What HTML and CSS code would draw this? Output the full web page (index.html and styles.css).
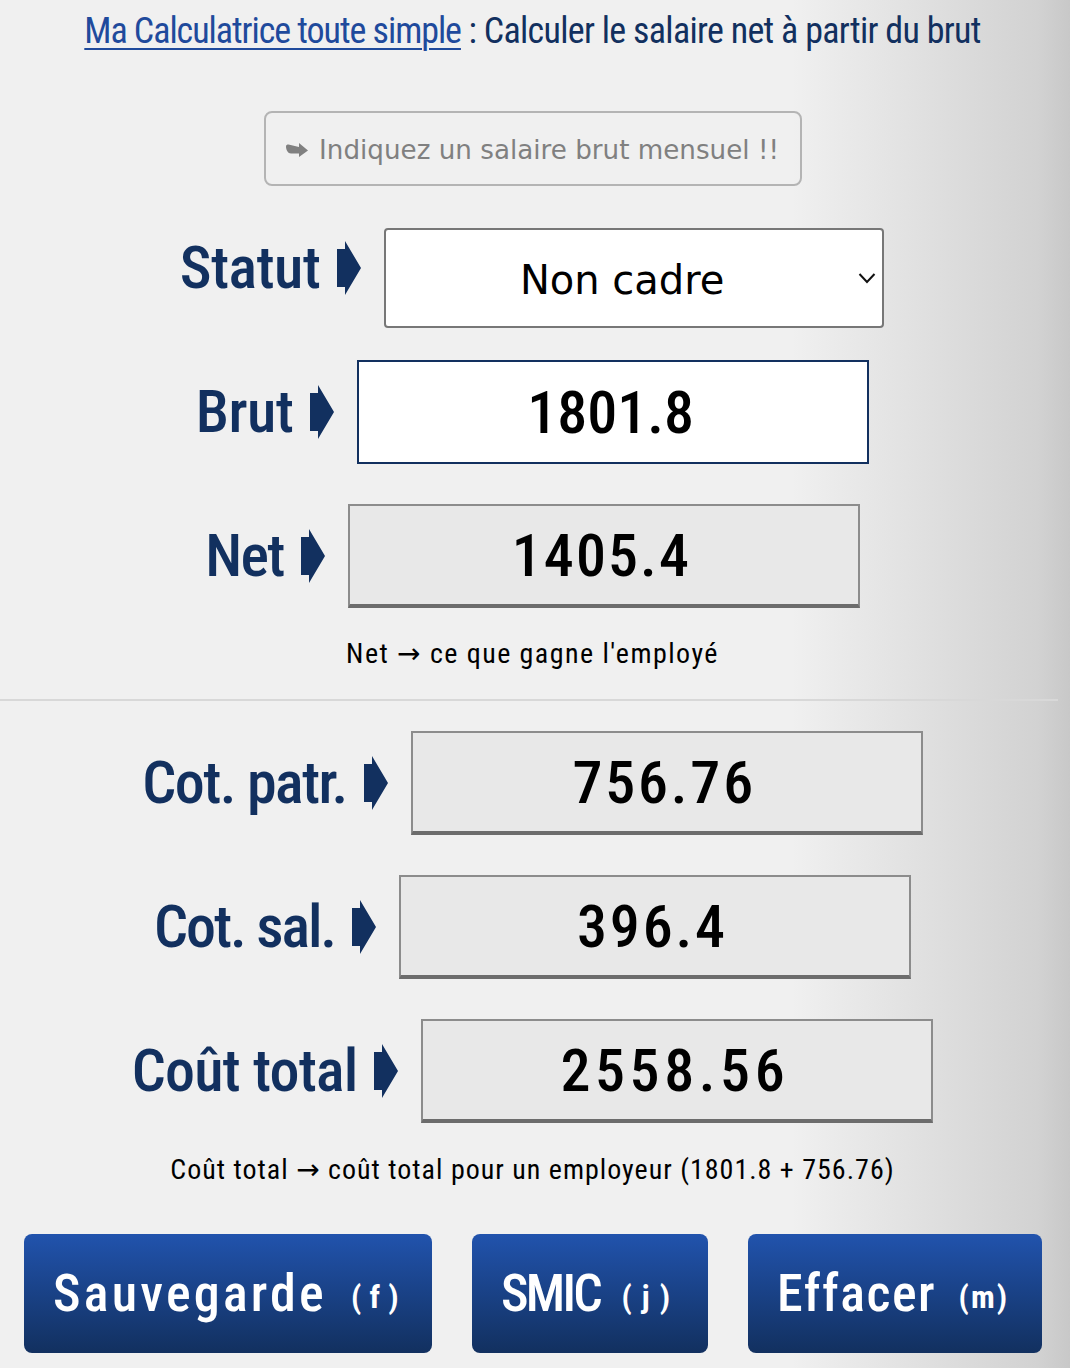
FILE: index.html
```html
<!DOCTYPE html>
<html lang="fr">
<head>
<title>Calculer le salaire net à partir du brut</title>
<meta charset="utf-8">
<meta name="viewport" content="width=device-width, initial-scale=1.0">
<link rel="stylesheet" href="styles.css">
</head>
<body>

<h1 class="title"><a href="#">Ma Calculatrice toute simple</a> : Calculer le salaire net à partir du brut</h1>

<div class="hint-row">
  <div class="hint"><svg class="hint-arrow" viewBox="0 0 22 14"><path d="M0 3.500C0 2 1 1.500 2.500 1.500L13 4V0l9 7.500L13 14v-3.500H5C2 10.500 0 7 0 3.500z"/></svg> Indiquez un salaire brut mensuel !!</div>
</div>

<div class="row row-select">
  <label class="field-label">Statut <svg class="arrow" viewBox="0 0 24 54"><path d="M0 8h8V0l16 27L8 54v-8H0z"/></svg></label>
  <div class="select-box">
    <span class="select-text">Non cadre</span>
    <svg class="chevron" viewBox="0 0 18 12"><path d="M1.500 2l7.500 8 7.500-8"/></svg>
  </div>
</div>

<div class="row">
  <label class="field-label">Brut <svg class="arrow" viewBox="0 0 24 54"><path d="M0 8h8V0l16 27L8 54v-8H0z"/></svg></label>
  <div class="value value-input">1801.8</div>
</div>

<div class="row">
  <label class="field-label label-net">Net <svg class="arrow" viewBox="0 0 24 54"><path d="M0 8h8V0l16 27L8 54v-8H0z"/></svg></label>
  <div class="value value-net">1405.4</div>
</div>

<p class="note note-net">Net <span class="note-arrow">→</span> ce que gagne l'employé</p>

<hr class="divider">

<div class="row">
  <label class="field-label label-patr">Cot. patr. <svg class="arrow" viewBox="0 0 24 54"><path d="M0 8h8V0l16 27L8 54v-8H0z"/></svg></label>
  <div class="value">756.76</div>
</div>

<div class="row">
  <label class="field-label label-sal">Cot. sal. <svg class="arrow" viewBox="0 0 24 54"><path d="M0 8h8V0l16 27L8 54v-8H0z"/></svg></label>
  <div class="value">396.4</div>
</div>

<div class="row">
  <label class="field-label label-total">Coût total <svg class="arrow" viewBox="0 0 24 54"><path d="M0 8h8V0l16 27L8 54v-8H0z"/></svg></label>
  <div class="value value-total">2558.56</div>
</div>

<p class="note note-total">Coût total <span class="note-arrow">→</span> coût total pour un employeur (1801.8 + 756.76)</p>

<div class="buttons">
  <button class="btn btn-save">Sauvegarde <small>(f)</small></button>
  <button class="btn btn-smic">SMIC <small>(j)</small></button>
  <button class="btn btn-clear">Effacer <small>(m)</small></button>
</div>

</body>
</html>
```

FILE: styles.css
```css
body {
  margin: 0;
  height: 1368px;
  overflow: hidden;
  font-family: Roboto, "Liberation Sans", sans-serif;
  font-stretch: 75%;
  background: linear-gradient(90deg, #f0f0f0 0, #f0f0f0 74%, #d2d2d2 97%, #c8c8c8 100%);
  color: #000;
}
.title {
  margin: 0;
  padding: 11px 5px 0 0;
  height: 111px;
  box-sizing: border-box;
  text-align: center;
  font-size: 36px;
  line-height: 40px;
  font-weight: 400;
  color: #12305f;
  letter-spacing: -0.7px;
}
.title a {
  color: #1f4a9c;
  letter-spacing: -1.05px;
  text-decoration-thickness: 2px;
  text-underline-offset: 5px;
}
.hint-row {
  display: flex;
  justify-content: center;
  padding-right: 5px;
}
.hint {
  width: 538px;
  height: 75px;
  box-sizing: border-box;
  border: 2px solid #b4b4b4;
  border-radius: 8px;
  padding-top: 2px;
  display: flex;
  align-items: center;
  justify-content: center;
  gap: 11px;
  font-family: "DejaVu Sans", sans-serif;
  font-stretch: normal;
  font-size: 26.2px;
  color: #808080;
}
.hint-arrow {
  width: 22px;
  height: 14px;
  fill: #808080;
}
.row {
  display: flex;
  justify-content: center;
  align-items: center;
  gap: 23px;
  padding-right: 5px;
  margin-bottom: 40px;
}
.row-select {
  align-items: flex-start;
  padding-right: 6px;
  margin-top: 42px;
  margin-bottom: 32px;
}
.row-select .field-label {
  margin-top: 5px;
}
.field-label {
  display: flex;
  align-items: center;
  gap: 17px;
  font-size: 60px;
  line-height: 70px;
  font-weight: 500;
  letter-spacing: -0.6px;
  color: #12305f;
  white-space: nowrap;
}
.label-net,
.label-patr {
  letter-spacing: -1.6px;
}
.label-sal {
  letter-spacing: -2.1px;
}
.label-total {
  letter-spacing: -0.8px;
}
.arrow {
  width: 24px;
  height: 54px;
  fill: #12305f;
  flex: none;
}
.select-box {
  width: 500px;
  height: 100px;
  box-sizing: border-box;
  position: relative;
  display: flex;
  align-items: center;
  justify-content: center;
  padding-right: 24px;
  padding-top: 4px;
  background: #fff;
  border: 2px solid #777;
  border-radius: 4px;
  font-family: "DejaVu Sans", sans-serif;
  font-stretch: normal;
  font-size: 40px;
}
.chevron {
  position: absolute;
  right: 6px;
  top: 42px;
  width: 18px;
  height: 12px;
  fill: none;
  stroke: #111;
  stroke-width: 2;
}
.value {
  width: 512px;
  height: 104px;
  box-sizing: border-box;
  padding-right: 5px;
  display: flex;
  align-items: center;
  justify-content: center;
  background: #e8e8e8;
  border: 2px solid #8c8c8c;
  border-bottom: 4px solid #6c6c6c;
  font-size: 60px;
  font-weight: 500;
  letter-spacing: 2.8px;
}
.value-input {
  background: #fff;
  border: 2px solid #12305f;
  letter-spacing: 0;
}
.value-net {
  letter-spacing: 2.1px;
}
.value-total {
  letter-spacing: 4.6px;
}
.note {
  margin: 0;
  text-align: center;
  padding-right: 5px;
  font-size: 28px;
  line-height: 34px;
}
.note-arrow {
  font-family: "DejaVu Sans", sans-serif;
  font-stretch: normal;
  line-height: 1;
}
.note-net {
  margin-top: -11px;
  letter-spacing: 1.45px;
}
.divider {
  width: 1058px;
  margin: 28px 0 30px;
  border: 0;
  border-top: 2px solid #d8d8d8;
}
.note-total {
  margin-top: -10px;
  letter-spacing: 1px;
}
.buttons {
  display: flex;
  gap: 40px;
  margin-top: 47px;
  padding-left: 24px;
}
.btn {
  height: 119px;
  border: 0;
  border-radius: 8px;
  padding: 0 0 0 29px;
  text-align: left;
  background: linear-gradient(180deg, #2153ad 0, #12305f 100%);
  color: #fff;
  font-family: Roboto, "Liberation Sans", sans-serif;
  font-stretch: 75%;
  font-size: 52px;
  font-weight: 500;
}
.btn small {
  font-size: 32px;
  font-weight: 700;
  margin-left: 9px;
  vertical-align: 3px;
}
.btn-save {
  width: 408px;
  letter-spacing: 3.200px;
}
.btn-save small {
  letter-spacing: 8px;
}
.btn-smic {
  width: 236px;
  letter-spacing: -2.7px;
}
.btn-smic small {
  margin-left: 12px;
  letter-spacing: 10px;
}
.btn-clear {
  width: 294px;
  letter-spacing: 1.5px;
}
.btn-clear small {
  letter-spacing: 2px;
}
```
